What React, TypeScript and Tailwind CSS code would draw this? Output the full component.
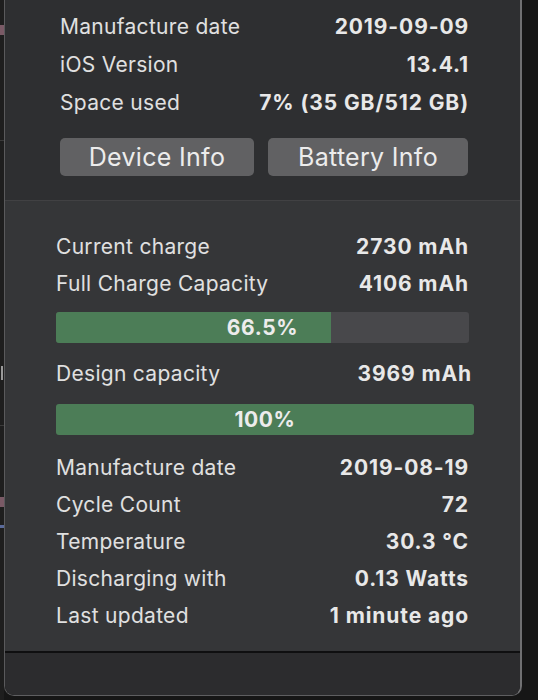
import React from "react";

type Row = { label: string; value: string };

const deviceRows: Row[] = [
  { label: "Manufacture date", value: "2019-09-09" },
  { label: "iOS Version", value: "13.4.1" },
  { label: "Space used", value: "7% (35 GB/512 GB)" },
];

const batteryRows: Row[] = [
  { label: "Manufacture date", value: "2019-08-19" },
  { label: "Cycle Count", value: "72" },
  { label: "Temperature", value: "30.3 °C" },
  { label: "Discharging with", value: "0.13 Watts" },
  { label: "Last updated", value: "1 minute ago" },
];

const InfoRow = ({ label, value, className = "" }: Row & { className?: string }) => (
  <div className={`flex items-center justify-between h-[37px] ${className}`}>
    <span className="text-[#e0e0e0] tracking-[0.3px]">{label}</span>
    <span className="font-bold text-[#e8e8e8] tracking-[0.9px]">{value}</span>
  </div>
);

const Bar = ({ percent, label, className = "" }: { percent: number; label: string; className?: string }) => (
  <div className={`relative h-[31px] rounded-[3px] bg-[#48484b] overflow-hidden ${className}`}>
    <div className="h-full bg-[#4c7d57]" style={{ width: `${percent}%` }} />
    <div className="absolute inset-0 flex items-center justify-center font-bold tracking-[0.6px] text-[#ececec]">
      {label}
    </div>
  </div>
);

export default function App() {
  return (
    <div
      className="flex h-[700px] w-[538px] bg-[#161616] text-[21px] leading-none"
      style={{ fontFamily: "Inter, 'Noto Sans', sans-serif" }}
    >
      {/* background window peeking on the left */}
      <div className="relative w-[4px] shrink-0 bg-[#1e1e1e]">
        <div className="absolute left-0 top-[25px] h-[10px] w-[4px] bg-[#7a5a66]" />
        <div className="absolute left-0 top-[140px] h-[1px] w-[4px] bg-[#3a3a3a]" />
        <div className="absolute left-0 top-[366px] h-[14px] w-[3px] border-r-2 border-[#9a9a9a]" />
        <div className="absolute left-0 top-[425px] h-[1px] w-[4px] bg-[#3a3a3a]" />
        <div className="absolute left-0 top-[497px] h-[10px] w-[4px] bg-[#7a5a66]" />
        <div className="absolute left-0 top-[525px] h-[3px] w-[4px] bg-[#5a6a9a]" />
      </div>

      {/* popover panel */}
      <div className="flex flex-col w-[518px] h-[696px] shrink-0 border-l border-r-2 border-b border-l-[#5a5a5c] border-r-[#707072] border-b-[#5e5e60] rounded-b-[10px] overflow-hidden">
        {/* device section */}
        <div className="bg-[#2e2f31] pt-[7px] pl-[55px] pr-[51px] pb-[24px]">
          {deviceRows.map((r) => (
            <InfoRow key={r.label} {...r} className="h-[38px]" />
          ))}
          <div className="flex gap-[14px] mt-[17px]">
            <button className="w-[194px] h-[38px] rounded-[5px] bg-[#616163] text-[25px] tracking-[0.3px] text-[#ececec]">
              Device Info
            </button>
            <button className="w-[200px] h-[38px] rounded-[5px] bg-[#616163] text-[25px] tracking-[0.3px] text-[#ececec]">
              Battery Info
            </button>
          </div>
        </div>

        <div className="h-[1px] bg-[#414143]" />

        {/* battery section */}
        <div className="flex-1 bg-[#353638] pt-[27px] pl-[51px] pr-[51px]">
          <InfoRow label="Current charge" value="2730 mAh" />
          <InfoRow label="Full Charge Capacity" value="4106 mAh" />
          <Bar percent={66.5} label="66.5%" className="w-[413px] mt-[10px]" />
          <InfoRow label="Design capacity" value="3969 mAh" className="w-[416px] mt-[12px]" />
          <Bar percent={100} label="100%" className="w-[418px] mt-[12px]" />
          <div className="mt-[14px]">
            {batteryRows.map((r) => (
              <InfoRow key={r.label} {...r} />
            ))}
          </div>
        </div>

        <div className="h-[2px] bg-[#0f0f10]" />

        {/* footer */}
        <div className="h-[42px] bg-[#2c2c2e]" />
      </div>
    </div>
  );
}
